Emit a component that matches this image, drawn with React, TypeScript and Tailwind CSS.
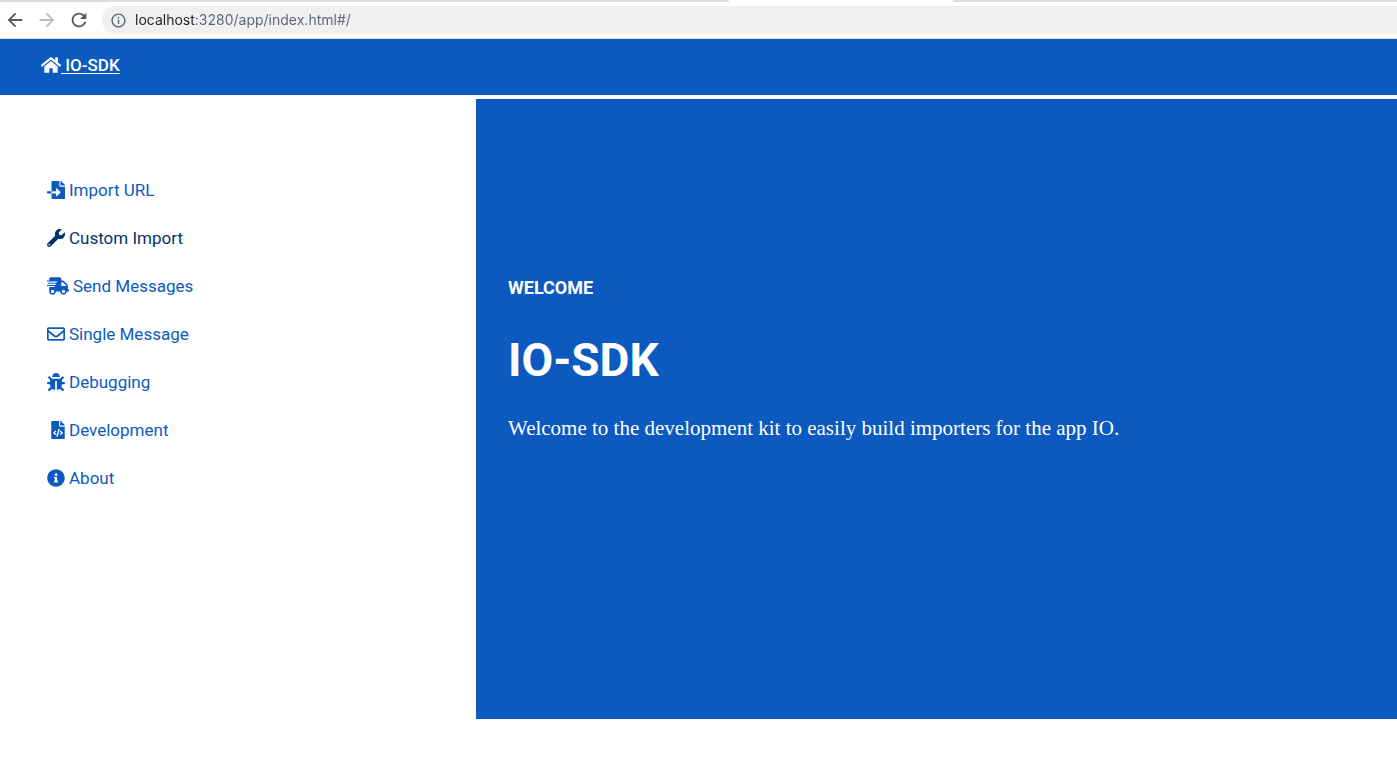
import type { IconType } from "react-icons";
import {
  FaBug,
  FaFileCode,
  FaFileImport,
  FaHome,
  FaInfoCircle,
  FaRegEnvelope,
  FaShippingFast,
  FaWrench,
} from "react-icons/fa";
import { MdArrowBack, MdArrowForward, MdInfoOutline, MdRefresh } from "react-icons/md";

type MenuItem = { label: string; icon: IconType; size: string; active?: boolean };

const menu: MenuItem[] = [
  { label: "Import URL", icon: FaFileImport, size: "w-[18px]" },
  { label: "Custom Import", icon: FaWrench, size: "w-[18px]", active: true },
  { label: "Send Messages", icon: FaShippingFast, size: "w-[22px]" },
  { label: "Single Message", icon: FaRegEnvelope, size: "w-[18px]" },
  { label: "Debugging", icon: FaBug, size: "w-[18px]" },
  { label: "Development", icon: FaFileCode, size: "ml-1 w-[14px]" },
  { label: "About", icon: FaInfoCircle, size: "w-[18px]" },
];

function BrowserBar() {
  return (
    <div className="border-b border-[#d5d8dc] bg-white">
      <div className="flex h-0.5">
        <div className="w-[52.2%] rounded-br-sm bg-[#dadde1]" />
        <div className="w-[16%]" />
        <div className="flex-1 rounded-bl-sm bg-[#dadde1]" />
      </div>
      <div className="flex h-9 items-center pl-1">
        <button type="button" aria-label="Back" className="mr-2.5 text-[#55585d]">
          <MdArrowBack size={22} />
        </button>
        <button type="button" aria-label="Forward" disabled className="mr-2.5 text-[#b9bbbd]">
          <MdArrowForward size={22} />
        </button>
        <button type="button" aria-label="Reload" className="mr-3 text-[#55585d]">
          <MdRefresh size={22} />
        </button>
        <div className="flex h-7 flex-1 items-center gap-2 rounded-l-full bg-[#eff0f2] pl-2">
          <MdInfoOutline size={17} className="text-[#5f6368]" />
          <input
            type="text"
            aria-label="Address"
            defaultValue="localhost:3280/app/index.html#/"
            className="flex-1 bg-[linear-gradient(to_right,#202124_60px,#5f6368_60px)] bg-clip-text font-['Inter',sans-serif] text-sm text-transparent caret-black outline-none"
          />
        </div>
      </div>
    </div>
  );
}

export default function App() {
  return (
    <div className="min-h-screen bg-white font-['Roboto',sans-serif]">
      <BrowserBar />
      <header className="flex h-14 items-start bg-[#0c5abf] pt-3.5 pl-[41px]">
        <a
          href="#/"
          className="flex items-center text-[17px] leading-6 font-medium whitespace-pre text-white"
        >
          <FaHome size={20} />
          <span className="underline underline-offset-2"> IO-SDK</span>
        </a>
      </header>
      <div className="mt-1 flex">
        <nav aria-label="Main" className="w-119 shrink-0 pt-[67px] pl-[47px]">
          <ul>
            {menu.map(({ label, icon: Icon, size, active }) => (
              <li key={label} className="flex h-12 items-center">
                <a
                  href="#/"
                  aria-current={active ? "page" : undefined}
                  className={
                    "flex items-center gap-1 text-[17px] leading-6 " +
                    (active ? "text-[#03326f]" : "text-[#0c5abf]")
                  }
                >
                  <Icon className={"h-[18px] " + size} />
                  {label}
                </a>
              </li>
            ))}
          </ul>
        </nav>
        <main className="h-155 flex-1 bg-[#0c5abf] px-8 pt-[177px] text-white">
          <p className="text-lg leading-6 font-bold">WELCOME</p>
          <h1 className="mt-8 text-[46px] leading-14 font-bold">IO-SDK</h1>
          <p className="mt-[26px] font-['Liberation_Serif',serif] text-[21px] leading-7">
            Welcome to the development kit to easily build importers for the app IO.
          </p>
        </main>
      </div>
    </div>
  );
}
